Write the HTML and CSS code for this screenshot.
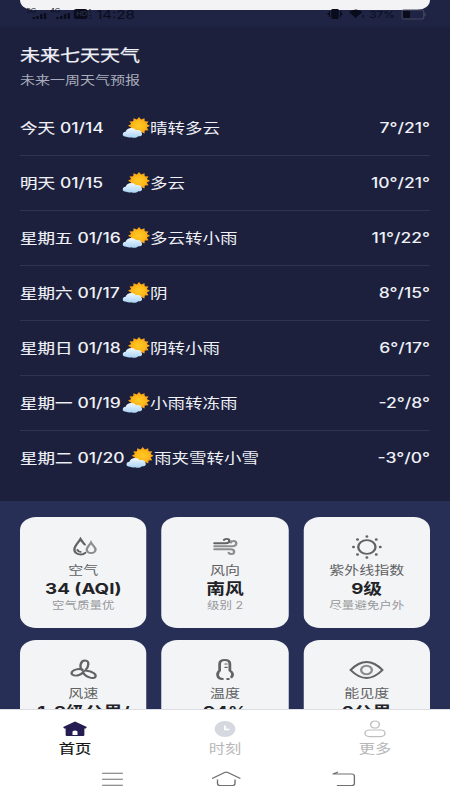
FILE: index.html
```html
<!DOCTYPE html>
<html lang="zh-CN">
<head>
<meta charset="utf-8">
<title>天气</title>
<link rel="stylesheet" href="styles.css">
</head>
<body>
<svg class="defs" width="0" height="0" aria-hidden="true">
  <defs>
    <radialGradient id="sunFill"><stop offset="0" stop-color="#ffc928"/><stop offset="1" stop-color="#fdb515"/></radialGradient>
    <linearGradient id="cloudFill" x1="0" y1="0" x2="0" y2="1"><stop offset="0" stop-color="#eff8ff"/><stop offset="1" stop-color="#a9d3f5"/></linearGradient>
    <symbol id="weather" viewBox="0 0 22 21">
      <polygon fill="#f8a51c" points="22,8.8 19.48,10.48 20.82,13.2 17.8,13.4 17.6,16.42 14.88,15.08 13.2,17.6 11.52,15.08 8.8,16.42 8.6,13.4 5.58,13.2 6.92,10.48 4.4,8.8 6.92,7.12 5.58,4.4 8.6,4.2 8.8,1.18 11.52,2.52 13.2,0 14.88,2.52 17.6,1.18 17.8,4.2 20.82,4.4 19.48,7.12"/>
      <circle cx="13.200" cy="8.800" r="6.200" fill="url(#sunFill)"/>
      <path fill="url(#cloudFill)" d="M3 19.800C-.8 19.700-.9 15.300 2.500 14.800 3.200 10.600 9 9.600 10.700 13.300c2.600-.9 4.600.7 4.600 2.500 1.200 2-.5 3.900-2.700 3.500-1.700 2-4.200 1.800-5.500.9-1.500.7-2.700.4-4.100-.4z"/>
    </symbol>
  </defs>
</svg>
<div class="screen">
  <main class="content">
    <section class="forecast">
      <div class="sheet"></div>
      <div class="status">
        <svg width="54" height="12" viewBox="0 0 54 12" fill="currentColor">
          <text x="0" y="5" class="tiny">5G</text><path d="M5 9h2v2H5zM8 8h2v3H8zM11 6h2v5h-2zM14 5h2v6h-2z"/>
          <text x="19" y="5" class="tiny">4G</text><path d="M24 9h2v2h-2zM27 8h2v3h-2zM30 6h2v5h-2zM33 5h2v6h-2z"/>
          <rect x="38" y="1" width="11" height="10" rx="2"/><text x="50" y="5" class="sim">1</text><text x="50" y="11" class="sim">2</text>
          <text x="40" y="8.500" class="tiny hd">HD</text>
        </svg>
        <span class="time">14:28</span>
        <svg class="right" width="32" height="12" viewBox="0 0 32 12" fill="currentColor"><rect x="4" y="1" width="6" height="10" rx="1"/><path d="M2 3h1v6H2zM1 5h1v2H1zM11 3h1v6h-1zM12 5h1v2h-1zM18 4q6-5 11 0l-5.500 6z"/><path d="M29 7h1v3h-1z"/></svg>
        <span class="battery-text">37%</span>
        <svg width="20" height="11" viewBox="0 0 20 11"><rect x=".5" y="1" width="17.500" height="9" rx="1.500" fill="none" stroke="#44465c"/><rect x="1.500" y="2" width="5.500" height="7" fill="currentColor"/><path d="M19 4v3" stroke="#44465c"/></svg>
      </div>
      <h1>未来七天天气</h1>
      <p class="subtitle">未来一周天气预报</p>
      <ul class="days">
        <li><span class="day">今天 <b>01/14</b></span><svg class="emoji"><use href="#weather"/></svg><span class="desc">晴转多云</span><span class="temp">7°/21°</span></li>
        <li><span class="day">明天 <b>01/15</b></span><svg class="emoji"><use href="#weather"/></svg><span class="desc">多云</span><span class="temp">10°/21°</span></li>
        <li><span class="day">星期五 <b>01/16</b></span><svg class="emoji"><use href="#weather"/></svg><span class="desc">多云转小雨</span><span class="temp">11°/22°</span></li>
        <li><span class="day">星期六 <b>01/17</b></span><svg class="emoji"><use href="#weather"/></svg><span class="desc">阴</span><span class="temp">8°/15°</span></li>
        <li><span class="day">星期日 <b>01/18</b></span><svg class="emoji"><use href="#weather"/></svg><span class="desc">阴转小雨</span><span class="temp">6°/17°</span></li>
        <li><span class="day">星期一 <b>01/19</b></span><svg class="emoji"><use href="#weather"/></svg><span class="desc">小雨转冻雨</span><span class="temp">-2°/8°</span></li>
        <li><span class="day">星期二 <b>01/20</b></span><svg class="emoji"><use href="#weather"/></svg><span class="desc">雨夹雪转小雪</span><span class="temp">-3°/0°</span></li>
      </ul>
    </section>
    <section class="cards">
      <article class="card">
        <svg class="icon" viewBox="0 0 28 28"><path d="M15.200 19.800A5 5 0 0 1 6.500 16.500C6.500 13 9.800 9.500 11.400 6c1.100 2.300 2.400 4 3.400 5.600M9 17q.7 1.700 2.300 1.900"/><path class="light" d="M19.800 9.500c-1.200 2.800-3.400 4.500-3.400 7a3.400 3.400 0 0 0 7 0c0-2.500-2.400-4.200-3.600-7z"/></svg>
        <span class="label">空气</span><strong>34 (AQI)</strong><small>空气质量优</small>
      </article>
      <article class="card">
        <svg class="icon" viewBox="0 0 28 28"><path d="M5.500 10.300h9q3 0 3-2.200t-2.300-2.200q-1.600 0-2 1"/><path class="light" d="M5.500 13.300h14q3.500 0 3.500-2.700T20.800 8q-2 0-2 1.500M5.500 16.300h12.500q3.300 0 3.300 2.400T19 21q-2 0-2-1.400"/></svg>
        <span class="label">风向</span><strong>南风</strong><small>级别 2</small>
      </article>
      <article class="card">
        <svg class="icon" viewBox="0 0 28 28"><circle cx="14.500" cy="14" r="6.900"/><path class="dots" d="M14.500 3.500v0M14.500 24.500v0M3.800 14v0M25.200 14v0M7 6.500v0M22 6.500v0M7 21.500v0M22 21.500v0"/></svg>
        <span class="label">紫外线指数</span><strong>9级</strong><small>尽量避免户外</small>
      </article>
      <article class="card">
        <svg class="icon" viewBox="0 0 28 28"><path d="M13 14.500C10 11 11.500 4.500 15 4.500 19 4.500 18 11 15.200 14.500M13 13.500C8 11.500 2.500 16 4.800 18.500 7.500 21 12 19 14 15.500M13.500 16C14.500 21 22.500 24 23.500 20.500 24 16.500 18 15 15.200 14.500"/></svg>
        <span class="label">风速</span><strong>1-3级公里/<br>小时</strong>
      </article>
      <article class="card">
        <svg class="icon" viewBox="0 0 28 28"><path class="heavy" d="M12 23C7.500 22.500 7 17.500 9.700 14.500V8q0-4 4.100-4t4.100 4v6.500c2.200 2 2.700 4.500 1.300 6.500M16 23h.8"/><path class="fine" d="M14 8h1.700M14 11.300h1.700"/></svg>
        <span class="label">温度</span><strong>94%</strong>
      </article>
      <article class="card">
        <svg class="icon" viewBox="0 0 28 28"><path d="M1.500 14Q14.200-2 27 14 14.200 30 1.500 14z"/><circle class="light" cx="14.200" cy="14" r="4.300"/></svg>
        <span class="label">能见度</span><strong>2公里</strong>
      </article>
    </section>
  </main>
  <footer>
    <nav class="tabs">
      <div class="tab active"><svg viewBox="0 0 20 18"><path fill="#251c52" d="M10 1.500l9.500 5.500-.8 1.500H17.500v6.500q0 1-1 1h-13q-1 0-1-1V8.500H1.300L.5 7z"/><path fill="#fff" d="M8 15v-3.500q2-2 4 0V15z"/></svg><span>首页</span></div>
      <div class="tab"><svg viewBox="0 0 20 18"><ellipse cx="10" cy="9" rx="8.300" ry="8" fill="#d5d8df"/><path d="M10 5.500v4h3.500" fill="none" stroke="#fff" stroke-width="1.500"/></svg><span>时刻</span></div>
      <div class="tab"><svg viewBox="0 0 20 18" fill="none" stroke="#bfbfbf" stroke-width="1.200"><circle cx="10" cy="4.500" r="3.500"/><rect x="2" y="10" width="16" height="6.600" rx="3.300"/></svg><span>更多</span></div>
    </nav>
    <div class="system">
      <svg viewBox="0 0 24 18"><path d="M3.700 3.200h16.600M3.700 9.200h16.600M3.700 15.200h16.600"/></svg>
      <svg viewBox="0 0 24 18"><path d="M.7 8.500l10-6q1.300-.7 2.600 0l10 6M5 9.500v4q0 2 2 2h10q2 0 2-2v-4"/></svg>
      <svg viewBox="0 0 24 18"><path d="M3 4h15.500q2 0 2 2v7.500q0 2-2 2H6.500M7.500 2L3.300 4"/></svg>
    </div>
  </footer>
</div>
</body>
</html>
```
FILE: styles.css
```css
* { box-sizing: border-box; }
body {
  margin: 0;
  width: 450px;
  height: 800px;
  overflow: hidden;
  font-family: Inter, "Noto Sans CJK SC", sans-serif;
}
.defs { position: absolute; }
/* The 360px layout is widened to fill the 450px viewport. */
.screen {
  width: 360px;
  height: 800px;
  transform: scaleX(1.25);
  transform-origin: 0 0;
  display: flex;
  flex-direction: column;
  background: #272f57;
}
.content { flex: 1; min-height: 0; overflow: hidden; }
.forecast {
  height: 501px;
  padding: 0 16px;
  background: linear-gradient(#1f2445 0 26px, #1c203c 27px);
  color: #eff1f7;
}
.sheet { height: 10px; background: #f3f3f5; border-radius: 0 0 10px 10px; }
.status {
  height: 16px;
  margin-top: -4px;
  padding: 0 3px 0 5px;
  display: flex;
  align-items: center;
  color: #0a0c1c;
}
.time { margin-left: 2px; font-size: 12px; }
.right { margin-left: auto; }
.battery-text { margin: 0 5px 0 2px; font-size: 9.500px; }
.tiny { font-size: 6px; }
.sim { font-size: 4.500px; }
.hd { fill: #343750; }
h1 {
  margin: 20px 0 0;
  font-size: 16px;
  line-height: 26px;
  font-weight: 400;
  -webkit-text-stroke: .25px currentColor;
}
.subtitle { margin: 3px 0 0; font-size: 12px; line-height: 20px; color: #a9adbb; }
.days { list-style: none; margin: 10px 0 0; padding: 0; }
.days li {
  height: 55px;
  padding-bottom: 2px;
  display: flex;
  align-items: center;
  border-bottom: 1px solid #30344f;
  font-size: 14px;
  white-space: nowrap;
}
.days li:last-child { border: 0; padding-bottom: 3px; }
.day { min-width: 81.500px; padding-right: 1px; -webkit-text-stroke: .15px currentColor; }
.day b { font-weight: 500; -webkit-text-stroke: 0; }
.emoji { width: 22px; height: 21px; flex: none; }
.desc { margin-left: .5px; }
.temp { margin: 1px 0 0 auto; font-weight: 500; }
.cards {
  padding: 16px 16px 0;
  display: grid;
  grid-template-columns: repeat(3, 1fr);
  grid-auto-rows: 111px;
  gap: 12px;
}
.card {
  min-width: 0;
  padding-top: 16px;
  display: flex;
  flex-direction: column;
  align-items: center;
  background: #f3f4f6;
  border-radius: 13px;
  text-align: center;
  white-space: nowrap;
  overflow: hidden;
}
.icon { width: 28px; height: 28px; flex: none; fill: none; stroke: #626365; stroke-width: 1.900; stroke-linecap: round; }
.icon .light { stroke: #8c8d8f; }
.icon .dots { stroke-width: 2.400; }
.icon .heavy { stroke-width: 2.200; }
.icon .fine { stroke-width: 1.200; }
.label { margin-top: .5px; font-size: 12px; line-height: 18px; color: #606163; }
.card strong { margin-top: -.5px; font-size: 15px; line-height: 19px; color: #222326; font-weight: 700; }
.card small { font-size: 10px; line-height: 14px; color: #97989b; }
footer { height: 91px; background: #fff; border-top: 1px solid #dcdde2; }
.tabs { display: flex; height: 48px; padding-top: 10px; }
.tab { flex: 1; display: flex; flex-direction: column; align-items: center; font-size: 13px; line-height: 18px; color: #b7b7b7; }
.tab svg { width: 20px; height: 18px; margin-bottom: 1px; }
.active { color: #151515; -webkit-text-stroke: .2px currentColor; }
.system { display: flex; justify-content: space-between; padding: 12px 73px 0 78px; }
.system svg { width: 24px; height: 18px; fill: none; stroke: #707070; stroke-width: 1.100; }
.system svg:nth-child(2) { margin-right: 4px; }
```
